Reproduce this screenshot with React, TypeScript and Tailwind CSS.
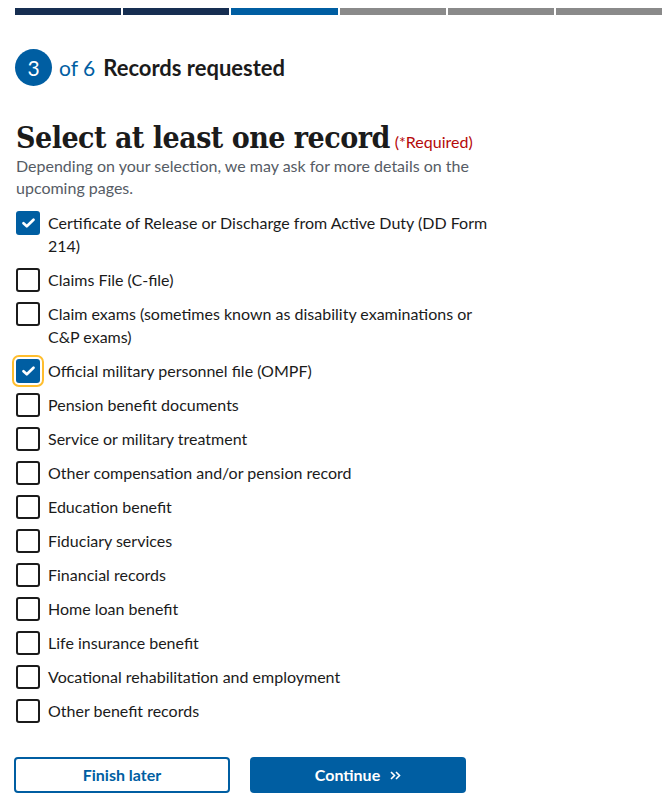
import React from "react";

const records = [
  { label: "Certificate of Release or Discharge from Active Duty (DD Form 214)", checked: true },
  { label: "Claims File (C-file)" },
  { label: "Claim exams (sometimes known as disability examinations or C&P exams)" },
  { label: "Official military personnel file (OMPF)", checked: true, focused: true },
  { label: "Pension benefit documents" },
  { label: "Service or military treatment" },
  { label: "Other compensation and/or pension record" },
  { label: "Education benefit" },
  { label: "Fiduciary services" },
  { label: "Financial records" },
  { label: "Home loan benefit" },
  { label: "Life insurance benefit" },
  { label: "Vocational rehabilitation and employment" },
  { label: "Other benefit records" },
];

const segments = ["bg-[#162e51]", "bg-[#162e51]", "bg-[#005ea2]", "bg-[#8a8a8a]", "bg-[#8a8a8a]", "bg-[#8a8a8a]"];

function Checkbox({ checked, focused }: { checked?: boolean; focused?: boolean }) {
  return (
    <span
      className={
        "-mb-[1px] flex h-[24px] w-[24px] shrink-0 items-center justify-center rounded-[3px] " +
        (checked ? "bg-[#005ea2] " : "border-2 border-[#1b1b1b] bg-white ") +
        (focused ? "outline-2 outline-offset-2 outline-[#ffbe2e]" : "")
      }
    >
      {checked && (
        <svg width="13" height="10" viewBox="0 0 13 10">
          <path d="M1.5 5.2 L4.8 8.3 L11.5 1.7" fill="none" stroke="white" strokeWidth="2.6" strokeLinecap="round" strokeLinejoin="round" />
        </svg>
      )}
    </span>
  );
}

export default function App() {
  return (
    <div className="min-h-[804px] w-[666px] bg-white font-['Lato',sans-serif] text-[#1b1b1b]">
      <div className="ml-[15px] flex w-[647px] gap-[2px] pt-[8px]">
        {segments.map((c, i) => (
          <div key={i} className={"h-[7px] flex-1 " + c} />
        ))}
      </div>

      <div className="ml-[15px] mt-[34px] flex h-[37px] items-center">
        <span className="flex h-[37px] w-[37px] items-center justify-center rounded-full bg-[#005ea2] text-[21px] text-white">3</span>
        <span className="ml-[7px] text-[21px] text-[#005ea2]">of 6</span>
        <span className="ml-[8px] text-[22px] font-bold">Records requested</span>
      </div>

      <div className="ml-[16px] mt-[35px] flex items-baseline">
        <h1 className="font-['DejaVu_Serif_Condensed','DejaVu_Serif',serif] text-[30px] font-bold leading-[34px] tracking-[-0.5px]">Select at least one record</h1>
        <span className="ml-[5px] text-[16px] text-[#b50909]">(*Required)</span>
      </div>
      <p className="ml-[16px] w-[470px] text-[16px] leading-[22px] text-[#565c65]">
        Depending on your selection, we may ask for more details on the upcoming pages.
      </p>

      <div className="ml-[16px] mt-[12px] flex flex-col gap-[11px]">
        {records.map((r) => (
          <label key={r.label} className="flex items-start gap-[8px]">
            <Checkbox checked={r.checked} focused={r.focused} />
            <span className="w-[440px] text-[16px] leading-[23px]">{r.label}</span>
          </label>
        ))}
      </div>

      <div className="ml-[14px] mt-[35px] flex gap-[20px]">
        <button className="flex h-[36px] w-[216px] items-center justify-center rounded-[4px] border-2 border-[#005ea2] bg-white text-[16px] font-bold text-[#005ea2]">
          Finish later
        </button>
        <button className="flex h-[36px] w-[216px] items-center justify-center gap-[10px] rounded-[4px] bg-[#005ea2] text-[16px] font-bold text-white">
          Continue
          <svg width="11" height="9" viewBox="0 0 11 9">
            <path d="M1 1 L4.5 4.5 L1 8 M6 1 L9.5 4.5 L6 8" fill="none" stroke="white" strokeWidth="1.6" />
          </svg>
        </button>
      </div>
    </div>
  );
}
